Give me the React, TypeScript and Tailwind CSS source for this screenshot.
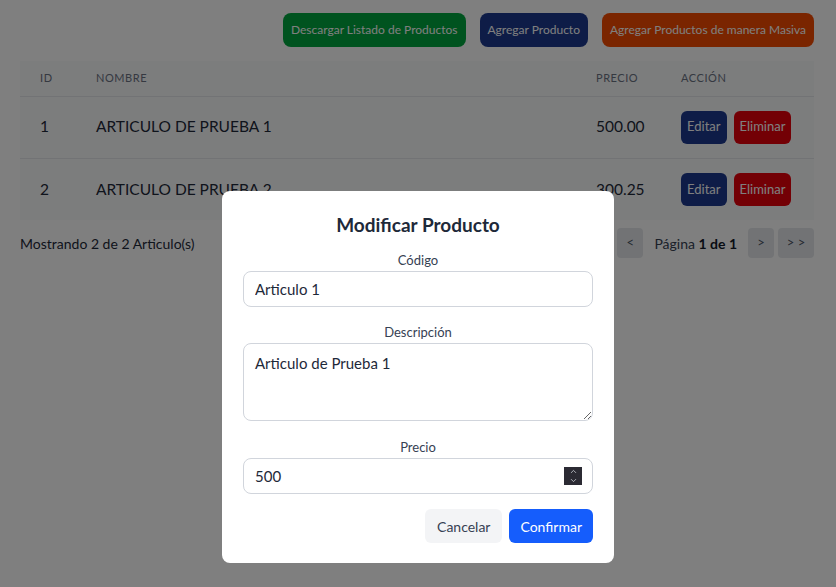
import { ChevronUp, ChevronDown } from 'lucide-react';

type Producto = { id: number; nombre: string; precio: string };

const productos: Producto[] = [
  { id: 1, nombre: 'ARTICULO DE PRUEBA 1', precio: '500.00' },
  { id: 2, nombre: 'ARTICULO DE PRUEBA 2', precio: '300.25' },
];

const Pagination = () => (
  <div className="flex items-center gap-1">
    <button className="h-[30px] w-[26px] rounded bg-gray-200 text-[13px] text-gray-600">&lt;&lt;</button>
    <button className="h-[30px] w-[26px] rounded bg-gray-200 text-[13px] text-gray-600">&lt;</button>
    <span className="mx-[7px] text-[14px] text-gray-700">
      Página <b className="font-bold text-gray-900">1 de 1</b>
    </span>
    <button className="h-[30px] w-[26px] rounded bg-gray-200 text-[13px] text-gray-600">&gt;</button>
    <button className="h-[30px] w-[36px] rounded bg-gray-200 text-[13px] text-gray-600">&gt; &gt;</button>
  </div>
);

export default function App() {
  return (
    <div className="relative min-h-screen bg-white font-['Segoe_UI',Lato,sans-serif]">
      <div className="pl-5 pr-[22px] pt-[13px]">
        <div className="flex justify-end gap-[14px]">
          <button className="h-[34px] rounded-lg bg-green-600 px-2 text-[12px] text-white">Descargar Listado de Productos</button>
          <button className="h-[34px] rounded-lg bg-blue-900 px-2 text-[12px] text-white">Agregar Producto</button>
          <button className="h-[34px] rounded-lg bg-orange-600 px-2 text-[12px] text-white">Agregar Productos de manera Masiva</button>
        </div>

        <table className="mt-[14px] w-full table-fixed bg-gray-50 text-left">
          <colgroup>
            <col className="w-[56px]" />
            <col />
            <col className="w-[85px]" />
            <col className="w-[153px]" />
          </colgroup>
          <thead>
            <tr className="h-[35px] border-b border-gray-200 text-[11px] uppercase tracking-wider text-gray-500">
              <th className="px-5 font-normal">ID</th>
              <th className="px-5 font-normal">Nombre</th>
              <th className="px-5 font-normal">Precio</th>
              <th className="px-5 font-normal">Acción</th>
            </tr>
          </thead>
          <tbody>
            {productos.map((p) => (
              <tr key={p.id} className="h-[62px] border-b border-gray-200 text-[15.5px] text-gray-800 last:border-b-0">
                <td className="px-5">{p.id}</td>
                <td className="px-5">{p.nombre}</td>
                <td className="px-5">{p.precio}</td>
                <td className="px-5">
                  <div className="flex gap-[7px]">
                    <button className="h-[33px] rounded-md bg-blue-900 px-[6px] text-[13px] text-white">Editar</button>
                    <button className="h-[33px] rounded-md bg-red-600 px-[6px] text-[13px] text-white">Eliminar</button>
                  </div>
                </td>
              </tr>
            ))}
          </tbody>
        </table>

        <div className="mt-2 flex items-center justify-between">
          <span className="text-[14px] text-gray-800">Mostrando 2 de 2 Articulo(s)</span>
          <Pagination />
        </div>
      </div>

      <div className="fixed inset-0 flex items-start justify-center bg-black/50 pt-[191px]">
        <div className="flex w-[392px] flex-col rounded-lg bg-white px-[21px] pb-5 pt-5">
          <h2 className="text-center text-[19px] font-bold leading-7 text-gray-800">Modificar Producto</h2>

          <label className="mt-3 text-center text-[13px] leading-[18px] text-gray-700">Código</label>
          <input
            className="mt-0.5 h-9 rounded-lg border border-gray-300 px-[11px] text-[15px] text-gray-800 outline-none"
            defaultValue="Articulo 1"
          />

          <label className="mt-4 text-center text-[13px] leading-[18px] text-gray-700">Descripción</label>
          <textarea
            className="mt-0.5 block h-[78px] rounded-lg border border-gray-300 px-[11px] py-2 text-[15px] text-gray-800 outline-none"
            defaultValue="Articulo de Prueba 1"
          />

          <label className="mt-[17px] text-center text-[13px] leading-[18px] text-gray-700">Precio</label>
          <div className="relative mt-0.5">
            <input
              className="h-9 w-full rounded-lg border border-gray-300 px-[11px] text-[15px] text-gray-800 outline-none"
              defaultValue="500"
            />
            <div className="absolute right-[11px] top-[9px] flex h-[18px] w-[18px] flex-col items-center justify-center bg-[#2b2a33] text-gray-300">
              <ChevronUp size={9} strokeWidth={2} />
              <ChevronDown size={9} strokeWidth={2} />
            </div>
          </div>

          <div className="mt-[15px] flex justify-end gap-[7px]">
            <button className="h-[34px] rounded-md bg-gray-100 px-3 text-[14px] text-gray-700">Cancelar</button>
            <button className="h-[34px] rounded-md bg-blue-600 px-[11px] text-[14px] text-white">Confirmar</button>
          </div>
        </div>
      </div>
    </div>
  );
}
